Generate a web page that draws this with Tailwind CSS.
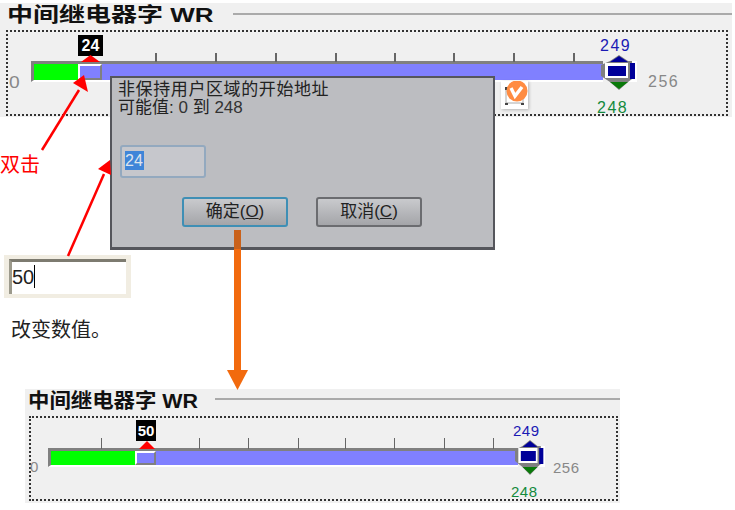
<!DOCTYPE html>
<html lang="zh-CN">
<head>
  <meta charset="UTF-8">
  <title>中间继电器字 WR</title>
  <script src="https://cdn.jsdelivr.net/npm/@tailwindcss/browser@4"></script>
</head>
<body class="bg-white font-['Liberation_Sans','Noto_Sans_CJK_SC',sans-serif]">
  <div class="relative w-[735px] h-[510px] overflow-hidden pt-[3px]">

    <!-- top panel -->
    <section class="w-[732px] h-[114px] bg-[#f0f0f0]">
      <div class="flex items-start h-[27px] pl-[7px]">
        <h2 class="w-[226px] text-[20px] leading-[24px] font-bold text-[#111] whitespace-nowrap origin-left scale-x-[1.3]">中间继电器字 WR</h2>
        <div class="flex-1 mt-[10px] h-[2px] bg-[#aaa]"></div>
      </div>
      <div class="relative ml-[6px] w-[722px] h-[86px] border-2 border-dotted border-[#333] pt-[29px] pl-[23px]">
        <span class="absolute left-[1px] top-[42px] text-[16px] leading-[17px] text-[#888] origin-left scale-x-[1.2]">0</span>
        <div class="relative w-[572px] h-[21px]">
          <i class="absolute left-[124px] -top-[8px] w-[2px] h-[9px] bg-[#666]"></i>
          <i class="absolute left-[184px] -top-[8px] w-[2px] h-[9px] bg-[#666]"></i>
          <i class="absolute left-[244px] -top-[8px] w-[2px] h-[9px] bg-[#666]"></i>
          <i class="absolute left-[304px] -top-[8px] w-[2px] h-[9px] bg-[#666]"></i>
          <i class="absolute left-[363px] -top-[8px] w-[2px] h-[9px] bg-[#666]"></i>
          <i class="absolute left-[422px] -top-[8px] w-[2px] h-[9px] bg-[#666]"></i>
          <i class="absolute left-[482px] -top-[8px] w-[2px] h-[9px] bg-[#666]"></i>
          <i class="absolute left-[542px] -top-[8px] w-[2px] h-[9px] bg-[#666]"></i>
          <div class="flex h-[21px] border-t-[3px] border-l-[3px] border-b-2 border-t-[#808080] border-l-[#808080] border-b-white bg-[#8080ff]">
            <div class="w-[44px] bg-[#00ff00]"></div>
            <div class="w-[24px] border-2 border-t-white border-l-white border-r-[#808080] border-b-[#808080] bg-[#8080ff]"></div>
          </div>
          <span class="absolute left-[47px] -top-[26px] w-[25px] h-[21px] bg-black text-white text-[16px] leading-[21px] font-bold text-center">24</span>
          <svg class="absolute left-[50px] -top-[6px] w-[19px] h-[7px]" viewBox="0 0 19 7"><polygon points="9.5,0 19,7 0,7" fill="#ff0000"/></svg>
        </div>
        <span class="absolute left-[592px] top-[5px] text-[16px] leading-[18px] tracking-[1.5px] text-[#1a1ab4]">249</span>
        <span class="absolute left-[589px] top-[67px] text-[16px] leading-[18px] tracking-[1.5px] text-[#138a3c]">248</span>
        <span class="absolute left-[640px] top-[41px] text-[16px] leading-[18px] tracking-[1.5px] text-[#888]">256</span>
        <svg class="absolute left-[593px] top-[23px] w-[36px] h-[35px]" viewBox="0 0 36 35">
          <rect x="26" y="6" width="10" height="21" fill="#fff"/>
          <polygon points="18,0 27,6 31,6 31,24 27,27 18,35 9,27 0,21 0,10 9,6" fill="#808080"/>
          <polygon points="18,1 27,7 9,7" fill="#000099"/>
          <rect x="4" y="8" width="23" height="15" fill="#fff"/>
          <rect x="7" y="11" width="18" height="10" fill="#000099"/>
          <rect x="29" y="8" width="5" height="16" fill="#000099"/>
          <polygon points="9,27 27,27 18,34" fill="#0a7a0a"/>
        </svg>
      </div>
    </section>

    <!-- left column -->
    <p class="mt-[36px] text-[20px] leading-[24px] text-[#f00]">双击</p>
    <div class="mt-[78px] ml-[4px] w-[127px] h-[43px] bg-[#f1ede2] p-[4px_5px]">
      <div class="h-[35px] bg-white border-t-[3px] border-l-[3px] border-t-[#7d7b70] border-l-[#9c9a8c] text-[20px] leading-[30px] text-[#222]">50<span class="inline-block w-[1px] h-[23px] bg-black align-[-4px]"></span></div>
    </div>
    <p class="mt-[19px] ml-[11px] text-[20px] leading-[26px] text-[#222]">改变数值。</p>

    <!-- bottom panel -->
    <section class="mt-[46px] ml-[25px] w-[595px] h-[114px] bg-[#f0f0f0]">
      <div class="flex items-start h-[27px] pl-[3px]">
        <h2 class="w-[187px] text-[20px] leading-[25px] font-bold text-[#111] whitespace-nowrap origin-left scale-x-[1.07]">中间继电器字 WR</h2>
        <div class="flex-1 mt-[9px] h-[2px] bg-[#aaa]"></div>
      </div>
      <div class="relative ml-[4px] w-[589px] h-[85px] border-2 border-dotted border-[#333] pt-[30px] pl-[17px]">
        <span class="absolute -left-[1px] top-[41px] text-[15px] leading-[16px] text-[#888]">0</span>
        <div class="relative w-[470px] h-[19px]">
          <i class="absolute left-[53px] -top-[10px] w-[1px] h-[11px] bg-[#666]"></i>
          <i class="absolute left-[151px] -top-[10px] w-[1px] h-[11px] bg-[#666]"></i>
          <i class="absolute left-[200px] -top-[10px] w-[1px] h-[11px] bg-[#666]"></i>
          <i class="absolute left-[250px] -top-[10px] w-[1px] h-[11px] bg-[#666]"></i>
          <i class="absolute left-[297px] -top-[10px] w-[1px] h-[11px] bg-[#666]"></i>
          <i class="absolute left-[346px] -top-[10px] w-[1px] h-[11px] bg-[#666]"></i>
          <i class="absolute left-[396px] -top-[10px] w-[1px] h-[11px] bg-[#666]"></i>
          <i class="absolute left-[445px] -top-[10px] w-[1px] h-[11px] bg-[#666]"></i>
          <div class="flex h-[19px] border-t-[3px] border-l-[3px] border-b-2 border-t-[#808080] border-l-[#808080] border-b-white bg-[#8080ff]">
            <div class="w-[84px] bg-[#00ff00]"></div>
            <div class="w-[21px] border-2 border-t-white border-l-white border-r-[#808080] border-b-[#808080] bg-[#8080ff]"></div>
          </div>
          <span class="absolute left-[88px] -top-[28px] w-[20px] h-[21px] bg-black text-white text-[15px] leading-[21px] font-bold text-center">50</span>
          <svg class="absolute left-[91px] -top-[7px] w-[16px] h-[8px]" viewBox="0 0 16 8"><polygon points="8,0 16,8 0,8" fill="#ff0000"/></svg>
        </div>
        <span class="absolute left-[482px] top-[4px] text-[15px] leading-[17px] tracking-[0.5px] text-[#1a1ab4]">249</span>
        <span class="absolute left-[480px] top-[65px] text-[15px] leading-[17px] tracking-[0.5px] text-[#138a3c]">248</span>
        <span class="absolute left-[522px] top-[41px] text-[15px] leading-[17px] tracking-[0.5px] text-[#888]">256</span>
        <svg class="absolute left-[484px] top-[22px] w-[30px] h-[35px]" viewBox="0 0 36 35" preserveAspectRatio="none">
          <rect x="26" y="6" width="10" height="21" fill="#fff"/>
          <polygon points="18,0 27,6 31,6 31,24 27,27 18,35 9,27 0,21 0,10 9,6" fill="#808080"/>
          <polygon points="18,1 27,7 9,7" fill="#000099"/>
          <rect x="4" y="8" width="23" height="15" fill="#fff"/>
          <rect x="7" y="11" width="18" height="10" fill="#000099"/>
          <rect x="29" y="8" width="5" height="16" fill="#000099"/>
          <polygon points="9,27 27,27 18,34" fill="#0a7a0a"/>
        </svg>
      </div>
    </section>

    <!-- dialog over the top panel -->
    <div class="absolute left-[110px] top-[76px] w-[385px] h-[174px] bg-[#bcbdc1] border-2 border-b-[3px] border-[#55565c] pl-[6px] pt-[3px] text-[#222]">
      <p class="text-[17px] leading-[18px] tracking-[0.6px]">非保持用户区域的开始地址</p>
      <p class="text-[17px] leading-[18px]">可能值: <span class="text-[#333]">0</span> 到 <span class="text-[#333]">248</span></p>
      <div class="mt-[28px] ml-[2px] w-[86px] h-[33px] bg-[#c6c7cc] border-2 border-[#93a9bf] rounded-[3px] pl-[3px] pt-[4px]">
        <span class="block w-[19px] h-[19px] bg-[#3f85d8] text-[#dde4ee] text-[16px] leading-[19px]">24</span>
      </div>
      <div class="flex mt-[19px] ml-[64px] gap-[28px]">
        <button class="w-[106px] h-[30px] rounded-[3px] border-2 border-[#3f8fb5] bg-gradient-to-b from-[#c9cacd] to-[#a4a5a9] text-[17px] leading-[24px] text-[#222]">确定(<u>O</u>)</button>
        <button class="w-[106px] h-[30px] rounded-[3px] border-2 border-[#6b6c70] bg-gradient-to-b from-[#c9cacd] to-[#a4a5a9] text-[17px] leading-[24px] text-[#222]">取消(<u>C</u>)</button>
      </div>
    </div>

    <!-- floating badge -->
    <div class="absolute left-[501px] top-[81px] w-[27px] h-[28px] bg-white shadow-[1px_1px_3px_rgba(0,0,0,0.25)]">
      <svg class="w-[27px] h-[28px]" viewBox="0 0 27 28">
        <rect x="5" y="7" width="17" height="15" fill="none" stroke="#aaa" stroke-width="1"/>
        <rect x="4" y="22" width="3" height="2" fill="#444"/>
        <rect x="20" y="22" width="3" height="2" fill="#444"/>
        <rect x="4" y="6" width="3" height="3" fill="#444"/>
        <circle cx="16" cy="10" r="10.5" fill="#ff8c42"/>
        <path d="M10 7 L14 15 L21 6" fill="none" stroke="#fff" stroke-width="3.4"/>
      </svg>
    </div>

    <!-- annotation arrows -->
    <svg class="absolute left-0 top-0 w-[735px] h-[510px] pointer-events-none" viewBox="0 0 735 510">
      <line x1="42" y1="150" x2="79" y2="90" stroke="#ff0000" stroke-width="2.500"/>
      <polygon points="84,75 88,92 73,83" fill="#ff0000"/>
      <line x1="68" y1="256" x2="104" y2="174" stroke="#ff0000" stroke-width="2.500"/>
      <polygon points="110,160 111,175 98,169" fill="#ff0000"/>
      <rect x="234" y="230" width="7" height="19" fill="#c9611a"/>
      <rect x="234" y="249" width="7" height="123" fill="#f26a0e"/>
      <polygon points="227,370 248,370 237.500,390" fill="#f26a0e"/>
    </svg>
  </div>
</body>
</html>
